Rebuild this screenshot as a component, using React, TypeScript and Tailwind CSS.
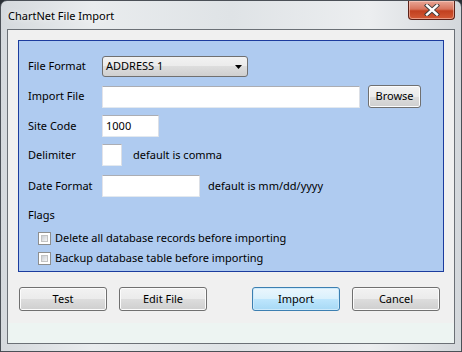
import React from "react";

const font = { fontFamily: '"Noto Sans", "Open Sans", sans-serif' };

function WinButton({ label, primary = false, className = "" }: { label: string; primary?: boolean; className?: string }) {
  return (
    <div
      className={`flex items-center justify-center rounded-[3px] border text-[11px] text-black ${
        primary
          ? "border-[#3c7fb1] bg-[linear-gradient(#eaf6fd_0%,#d9f0fc_50%,#bee6fd_50%,#a7d9f5_100%)] shadow-[inset_0_0_0_1px_#cdeafb]"
          : "border-[#707070] bg-[linear-gradient(#f2f2f2_0%,#ebebeb_50%,#dddddd_50%,#cfcfcf_100%)] shadow-[inset_0_0_0_1px_#fcfcfc]"
      } ${className}`}
    >
      {label}
    </div>
  );
}

function TextBox({ value = "", className = "" }: { value?: string; className?: string }) {
  return (
    <div
      className={`flex h-[22px] items-center border border-[#abadb3] border-b-[#e3e9ef] border-l-[#e2e3ea] border-r-[#dbdfe6] bg-white pl-[3px] text-[11px] text-black ${className}`}
    >
      {value}
    </div>
  );
}

function CheckBox({ label }: { label: string }) {
  return (
    <div className="flex h-[20px] items-center pl-[10px]">
      <div className="h-[13px] w-[13px] border border-[#8e8f8f] bg-white p-[2px]">
        <div className="h-full w-full border border-[#c3c3c3] bg-[linear-gradient(135deg,#cbcfd5,#f6f6f6)]" />
      </div>
      <span className="ml-[4px] text-[11px] text-black">{label}</span>
    </div>
  );
}

export default function App() {
  return (
    <div style={font} className="relative h-[352px] w-[462px] overflow-hidden bg-[#2a2f35]">
      <div className="flex h-full w-full flex-col rounded-t-[7px] border border-[#4b5057] bg-[linear-gradient(90deg,#d5d9dd,#e9ecee_20%,#dfe3e6_50%,#eceef0_80%,#d3d7db)] px-[6px] pb-[7px]">
        {/* title bar */}
        <div className="relative flex h-[28px] shrink-0 items-center pl-[1px] pt-[2px]">
          <span className="text-[11px] text-black [text-shadow:0_0_6px_#ffffff]">ChartNet File Import</span>
          <div className="absolute right-[0px] top-[0px] flex h-[19px] w-[47px] items-center justify-center rounded-b-[4px] border border-t-0 border-[#5b2118] bg-[linear-gradient(#e8a696_0%,#d8745d_45%,#c2401f_55%,#d35a36_100%)] shadow-[inset_0_0_0_1px_rgba(255,220,210,0.5)]">
            <svg width="16" height="12" viewBox="0 0 16 12">
              <path d="M3 1.5 L13 10.5 M13 1.5 L3 10.5" stroke="#3a3a3a" strokeWidth="4.2" strokeLinecap="square" />
              <path d="M3 1.5 L13 10.5 M13 1.5 L3 10.5" stroke="#ffffff" strokeWidth="2.4" strokeLinecap="square" />
            </svg>
          </div>
        </div>
        {/* client area */}
        <div className="flex flex-1 flex-col border border-[#6b7076] bg-[#f0f0f0]">
          <div className="px-[10px] pt-[10px]">
            <div className="flex h-[232px] flex-col border border-[#1c3c9e] bg-[#afcbf0] pl-[9px]">
              <div className="mt-[15px] flex h-[21px] items-center">
                <span className="w-[74px] text-[11px] text-black">File Format</span>
                <div className="flex h-[21px] w-[146px] items-center justify-between rounded-[3px] border border-[#707070] bg-[linear-gradient(#f2f2f2_0%,#ebebeb_50%,#dddddd_50%,#cfcfcf_100%)] pl-[3px] pr-[5px] text-[11px] text-black">
                  <span>ADDRESS 1</span>
                  <svg width="7" height="4" viewBox="0 0 7 4">
                    <path d="M0 0 H7 L3.5 4 Z" fill="#000" />
                  </svg>
                </div>
              </div>
              <div className="mt-[8px] flex h-[23px] items-center">
                <span className="w-[74px] text-[11px] text-black">Import File</span>
                <TextBox className="w-[258px]" />
                <WinButton label="Browse" className="ml-[8px] h-[23px] w-[53px]" />
              </div>
              <div className="mt-[7px] flex h-[22px] items-center">
                <span className="w-[74px] text-[11px] text-black">Site Code</span>
                <TextBox value="1000" className="w-[57px]" />
              </div>
              <div className="mt-[7px] flex h-[22px] items-center">
                <span className="w-[74px] text-[11px] text-black">Delimiter</span>
                <TextBox className="w-[20px]" />
                <span className="ml-[11px] text-[11px] text-black">default is comma</span>
              </div>
              <div className="mt-[9px] flex h-[22px] items-center">
                <span className="w-[74px] text-[11px] text-black">Date Format</span>
                <TextBox className="w-[98px]" />
                <span className="ml-[8px] text-[11px] text-black">default is mm/dd/yyyy</span>
              </div>
              <div className="mt-[10px] flex h-[16px] items-center text-[11px] text-black">Flags</div>
              <div className="mt-[5px]">
                <CheckBox label="Delete all database records before importing" />
                <CheckBox label="Backup database table before importing" />
              </div>
            </div>
          </div>
          <div className="mt-[15px] flex px-[11px]">
            <WinButton label="Test" className="h-[24px] w-[88px]" />
            <WinButton label="Edit File" className="ml-[12px] h-[24px] w-[88px]" />
            <WinButton label="Import" primary className="ml-[45px] h-[24px] w-[88px]" />
            <WinButton label="Cancel" className="ml-[12px] h-[24px] w-[88px]" />
          </div>
          <div className="mt-auto h-[20px] bg-[#edf4f2]" />
        </div>
      </div>
    </div>
  );
}
